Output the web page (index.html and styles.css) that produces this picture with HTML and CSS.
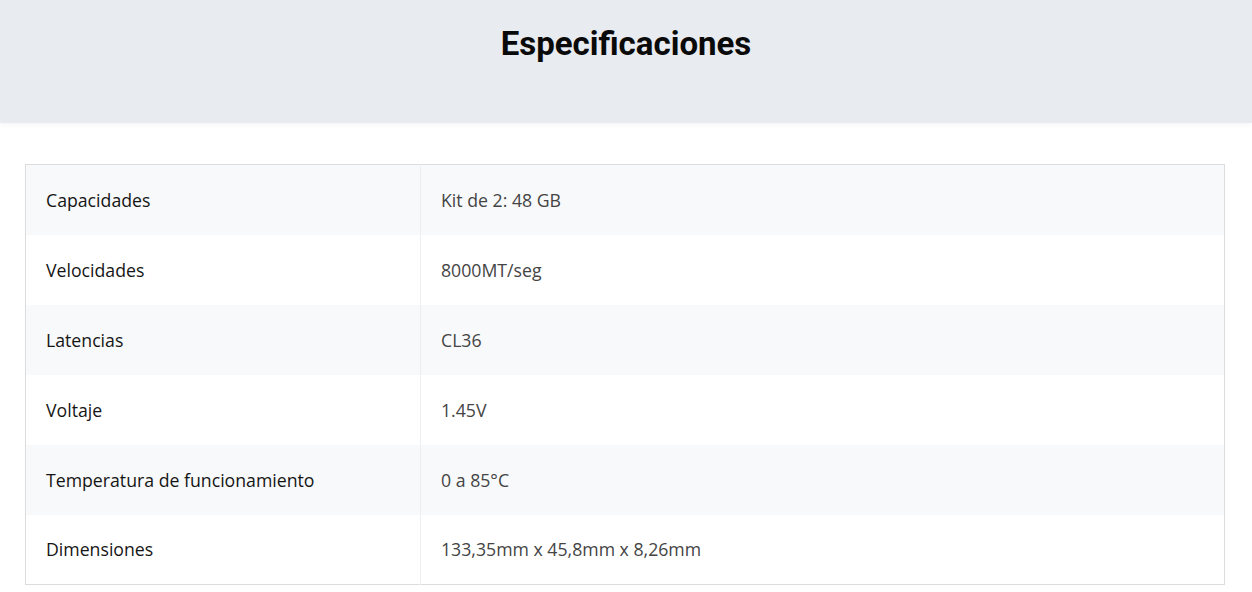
FILE: index.html
```html
<!DOCTYPE html>
<html lang="es">
<head>
    <meta charset="UTF-8">
    <meta name="viewport" content="width=device-width, initial-scale=1.0">
    <title>Especificaciones</title>
    <link rel="stylesheet" href="styles.css">
</head>
<body>
    <div class="spec-header">
        <h2 class="spec-title">Especificaciones</h2>
    </div>
    <div class="spec-body">
        <table class="spec-table">
            <tr><td class="spec-label">Capacidades</td><td class="spec-value">Kit de 2: 48 GB</td></tr>
            <tr><td class="spec-label">Velocidades</td><td class="spec-value">8000MT/seg</td></tr>
            <tr><td class="spec-label">Latencias</td><td class="spec-value">CL36</td></tr>
            <tr><td class="spec-label">Voltaje</td><td class="spec-value">1.45V</td></tr>
            <tr><td class="spec-label">Temperatura de funcionamiento</td><td class="spec-value">0 a 85°C</td></tr>
            <tr><td class="spec-label">Dimensiones</td><td class="spec-value">133,35mm x 45,8mm x 8,26mm</td></tr>
        </table>
    </div>
</body>
</html>
```
FILE: styles.css
```css
body {
    margin: 0;
    background: #fff;
    font-family: "Open Sans", "Noto Sans", sans-serif;
}

.spec-header {
    height: 123px;
    background-color: #e8ebef;
    box-shadow: 0 2px 4px rgba(0, 0, 0, 0.04);
    display: flex;
    justify-content: center;
    padding-top: 22px;
    box-sizing: border-box;
}

.spec-title {
    margin: 0;
    font-family: Roboto, "Liberation Sans", sans-serif;
    font-weight: 700;
    font-size: 33px;
    line-height: 44px;
    color: #0a0a0a;
}

.spec-body {
    padding: 41px 27px 0 25px;
}

.spec-table {
    width: 100%;
    border-collapse: collapse;
    border: 1px solid #dcdcdc;
}

.spec-table tr {
    height: 70px;
}

.spec-table tr:nth-child(odd) {
    background-color: #f8f9fa;
}

.spec-table td {
    padding: 0 20px;
    font-size: 17.7px;
    vertical-align: middle;
}

.spec-label {
    width: 354px;
    color: #151515;
    border-right: 1px solid #eceef0;
}

.spec-value {
    color: #444;
}
```
